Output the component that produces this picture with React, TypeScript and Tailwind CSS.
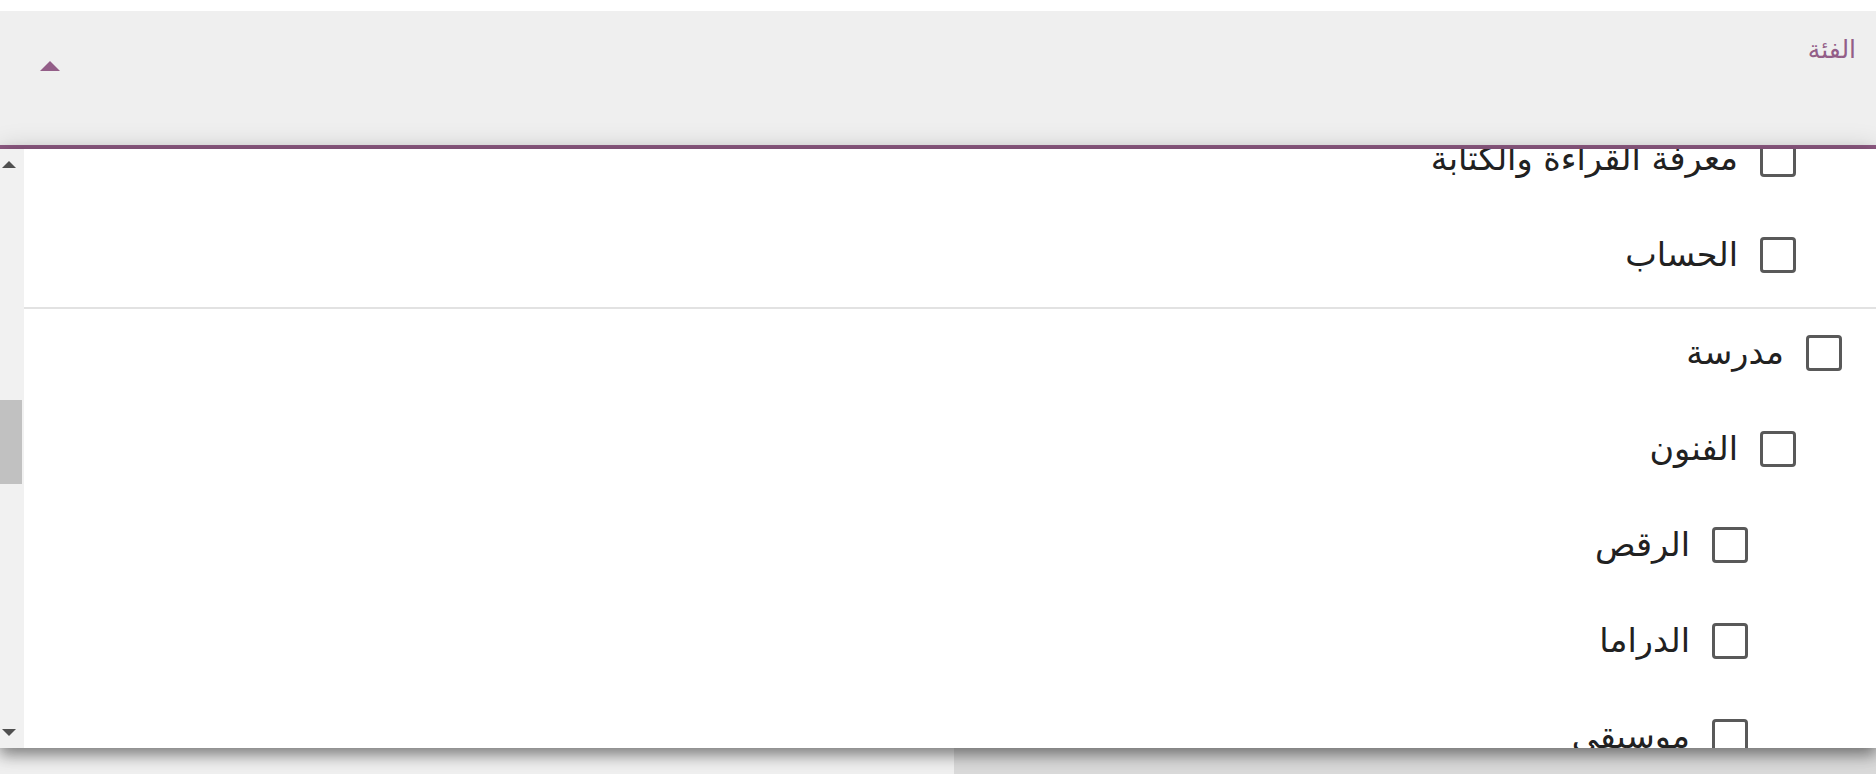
import React from 'react';

type Item = { label: string; level: number; divider?: boolean; short?: boolean };

const ITEMS: Item[] = [
  { label: 'معرفة القراءة والكتابة', level: 1 },
  { label: 'الحساب', level: 1 },
  { label: 'مدرسة', level: 0, divider: true, short: true },
  { label: 'الفنون', level: 1 },
  { label: 'الرقص', level: 2 },
  { label: 'الدراما', level: 2 },
  { label: 'موسيقى', level: 2 },
];

const LEVEL_PAD = ['pr-[34px]', 'pr-[80px]', 'pr-[128px]'];

function Checkbox() {
  return <span className="block w-[36px] h-[36px] shrink-0 rounded-[4px] border-[3px] border-[#595959] bg-white" />;
}

function Row({ item }: { item: Item }) {
  return (
    <>
      {item.divider && (
        <div className="pt-[4px]">
          <div className="h-[2px] bg-[#e2e2e2]" />
        </div>
      )}
      <div
        className={`flex items-center gap-[22px] ${LEVEL_PAD[item.level]} ${
          item.short ? 'h-[92px] pb-[4px]' : 'h-[96px]'
        }`}
      >
        <Checkbox />
        <span className="text-[33.5px] leading-none text-[#212121] whitespace-nowrap">{item.label}</span>
      </div>
    </>
  );
}

function Arrow({ up }: { up?: boolean }) {
  return (
    <svg width="14" height="7" viewBox="0 0 14 7">
      <polygon points={up ? '0,7 14,7 7,0' : '0,0 14,0 7,7'} fill="#505050" />
    </svg>
  );
}

function Scrollbar() {
  return (
    <div dir="ltr" className="w-[24px] shrink-0 bg-[#f1f1f1] flex flex-col">
      <div className="h-[31px] flex items-center pl-[2px]">
        <Arrow up />
      </div>
      <div className="h-[220px]" />
      <div className="h-[84px] w-[22px] bg-[#c1c1c1]" />
      <div className="flex-1" />
      <div className="h-[31px] flex items-center pl-[2px]">
        <Arrow />
      </div>
    </div>
  );
}

export default function App() {
  return (
    <div
      dir="rtl"
      className="w-[1876px] h-[774px] overflow-hidden bg-white flex flex-col"
      style={{ fontFamily: '"DejaVu Sans", "Noto Sans", sans-serif' }}
    >
      <div className="h-[11px] shrink-0 bg-white" />

      {/* select field */}
      <div className="h-[134px] shrink-0 bg-[#efefef] flex justify-between">
        <span className="pr-[20px] pt-[26px] text-[25px] leading-none text-[#935e88]">الفئة</span>
        <div className="pl-[40px] pt-[50px]">
          <svg width="20" height="10" viewBox="0 0 20 10">
            <polygon points="0,10 20,10 10,0" fill="#935e88" />
          </svg>
        </div>
      </div>
      <div className="h-[4px] shrink-0 bg-[#915c85]" />

      {/* open panel */}
      <div className="relative z-10 h-[599px] shrink-0 flex bg-white shadow-[0_7px_14px_rgba(0,0,0,0.42),0_-2px_24px_rgba(0,0,0,0.14)]">
        <div className="flex-1 overflow-hidden">
          <div className="mt-[-38px]">
            {ITEMS.map((item) => (
              <Row key={item.label} item={item} />
            ))}
          </div>
        </div>
        <Scrollbar />
      </div>

      <div className="flex-1 flex">
        <div className="w-[922px] bg-[#d9d9d9]" />
        <div className="flex-1 bg-[#efefef]" />
      </div>
    </div>
  );
}
